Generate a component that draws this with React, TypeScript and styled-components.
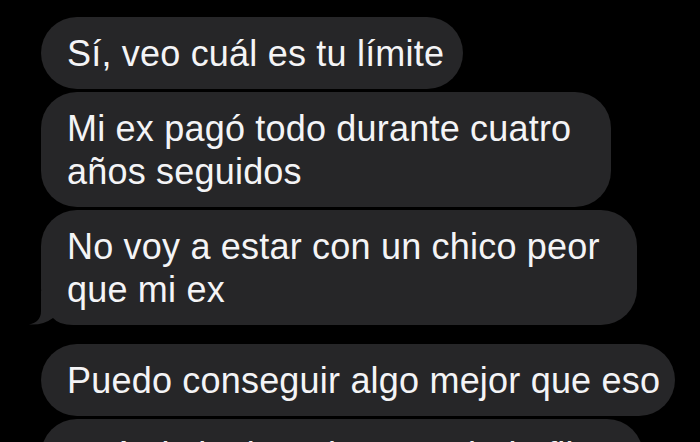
import React from "react";
import styled, { createGlobalStyle } from "styled-components";

const Global = createGlobalStyle`
  html, body {
    margin: 0;
    padding: 0;
    background: #000;
    height: 442px;
    overflow: hidden;
  }
  #root { height: 442px; }
`;

const Thread = styled.div`
  display: flex;
  flex-direction: column;
  gap: 19px;
  padding: 17px 0 0 41px;
  box-sizing: border-box;
  height: 442px;
  overflow: hidden;
  background: #000;
  font-family: "Liberation Sans", Arial, sans-serif;
`;

const Group = styled.div`
  display: flex;
  flex-direction: column;
  align-items: flex-start;
  gap: 3px;
`;

const Bubble = styled.div<{ $w: number }>`
  position: relative;
  box-sizing: border-box;
  width: ${(p) => p.$w}px;
  padding: 15px 0 14px 26px;
  border-radius: 36px;
  background: #262628;
  color: #f4f4f6;
  font-size: 36px;
  line-height: 43px;
  letter-spacing: 0.2px;
  white-space: nowrap;
`;

const Text = styled.span`
  position: relative;
  z-index: 1;
`;

const Tail = styled.svg`
  position: absolute;
  z-index: 0;
  left: -13px;
  bottom: 0;
  width: 50px;
  height: 34px;
  display: block;
`;

const BubbleTail = () => (
  <Tail viewBox="0 0 50 34" aria-hidden="true">
    <path
      d="M13 0 L13 20 Q13 31 1 33.5 Q15 34.5 25 27 Q31 34 45 34 L50 34 L50 0 Z"
      fill="#262628"
    />
  </Tail>
);

export default function App() {
  return (
    <>
      <Global />
      <Thread>
        <Group>
          <Bubble $w={422}>
            <Text>Sí, veo cuál es tu límite</Text>
          </Bubble>
          <Bubble $w={570}>
            <Text>
              Mi ex pagó todo durante cuatro
              <br />
              años seguidos
            </Text>
          </Bubble>
          <Bubble $w={596}>
            <BubbleTail />
            <Text>
              No voy a estar con un chico peor
              <br />
              que mi ex
            </Text>
          </Bubble>
        </Group>
        <Group>
          <Bubble $w={634}>
            <Text>Puedo conseguir algo mejor que eso</Text>
          </Bubble>
          <Bubble $w={602}>
            <Text>Y tú ni siquiera tienes trabajo fijo</Text>
          </Bubble>
        </Group>
      </Thread>
    </>
  );
}
